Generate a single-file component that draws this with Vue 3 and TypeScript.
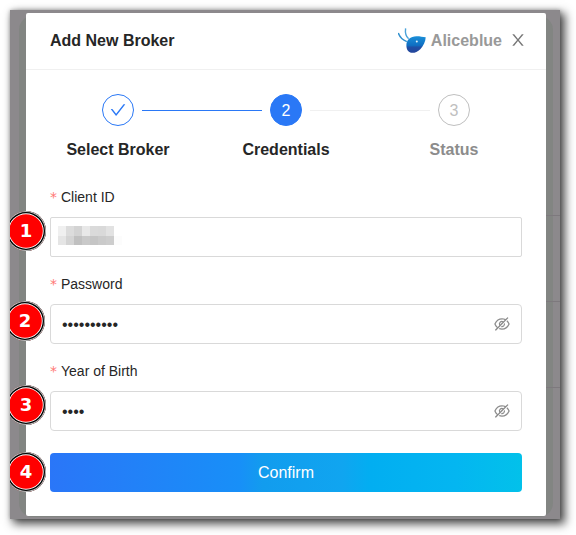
<script setup lang="ts">
interface Step {
  label: string
  state: 'done' | 'active' | 'wait'
}

const steps: Step[] = [
  { label: 'Select Broker', state: 'done' },
  { label: 'Credentials', state: 'active' },
  { label: 'Status', state: 'wait' },
]

const secrets = [
  { label: 'Password', value: '••••••••••' },
  { label: 'Year of Birth', value: '••••' },
]

const mosaic: string[] = [
  '#f0f0f0', '#dcdcdc', '#d3d3d3', '#e8e8e8', '#dadada', '#d9d9d9', '#e2e2e2', '#ffffff',
  '#e5e5e5', '#d4d4d4', '#c0c0c0', '#c9c9c9', '#c5c5c5', '#cacaca', '#cdcdcd', '#fcfcfc',
]
</script>

<template>
  <div class="page">
    <div class="backdrop">
      <div class="panel"></div>
      <i class="rule r1"></i>
      <i class="rule r2"></i>
      <i class="rule r3"></i>
      <section class="modal">
        <header class="head">
          <h1>Add New Broker</h1>
          <div class="brand">
            <svg class="logo" viewBox="0 0 28 26">
              <defs>
                <linearGradient id="body" x1="0" y1="0" x2="0" y2="1">
                  <stop offset="0" stop-color="#1a8fd8" />
                  <stop offset=".55" stop-color="#0f6ec2" />
                  <stop offset=".66" stop-color="#1f4fa6" />
                  <stop offset="1" stop-color="#24459a" />
                </linearGradient>
              </defs>
              <path d="M.3 5C1.600 9 4.500 12 8.800 13.600" fill="none" stroke="#2f8fcd" stroke-width="1.500" />
              <path d="M7.600.3C7 4.500 7.600 8 10.600 10.800" fill="none" stroke="#4ba3da" stroke-width="1.400" />
              <path d="M8.400 17.500C8.300 12 12.500 8.300 18.500 8.300C22 8.300 25 9 27.700 9.200C27.500 13.500 25.500 17.500 22.300 21.200C19.500 24 16 25.200 13 24.700C10 24.100 8.400 21 8.400 17.500Z" fill="url(#body)" />
              <circle cx="18.800" cy="13.500" r="1" fill="#e4f3fb" />
            </svg>
            <span>Aliceblue</span>
            <svg class="close" viewBox="0 0 1024 1024"><path d="M563.8 512l262.5-312.9c4.4-5.2.7-13.1-6.1-13.1h-79.8c-4.7 0-9.2 2.1-12.3 5.7L511.6 449.8 295.1 191.7c-3-3.6-7.5-5.7-12.3-5.7H203c-6.8 0-10.5 7.9-6.1 13.1L459.4 512 196.9 824.9A7.95 7.95 0 00203 838h79.8c4.7 0 9.2-2.1 12.3-5.7l216.5-258.1 216.5 258.1c3 3.6 7.5 5.700 12.300 5.700h79.800c6.800 0 10.500-7.900 6.100-13.100L563.800 512z" /></svg>
          </div>
        </header>

        <ol class="steps">
          <li v-for="(step, i) in steps" :key="step.label" :class="step.state">
            <div class="track">
              <i class="line before"></i>
              <span class="dot">
                <svg v-if="step.state === 'done'" viewBox="0 0 1024 1024"><path d="M912 190h-69.9c-9.8 0-19.1 4.5-25.1 12.2L404.7 724.5 207 474a32 32 0 00-25.1-12.2H112c-6.7 0-10.4 7.7-6.3 12.9l273.9 347c12.8 16.2 37.4 16.2 50.3 0l488.4-618.9c4.1-5.1.4-12.8-6.3-12.8z" /></svg>
                <span v-else class="num">{{ i + 1 }}</span>
              </span>
              <i class="line after"></i>
            </div>
            <b>{{ step.label }}</b>
          </li>
        </ol>

        <div class="form">
          <div class="field">
            <label><em>*</em>Client ID</label>
            <div class="input square">
              <div class="mosaic">
                <i v-for="(c, i) in mosaic" :key="i" :style="{ background: c }"></i>
              </div>
            </div>
          </div>
          <div v-for="s in secrets" :key="s.label" class="field">
            <label><em>*</em>{{ s.label }}</label>
            <div class="input">
              <span class="value">{{ s.value }}</span>
              <svg class="eye" viewBox="0 0 1024 1024">
                <path d="M942.2 486.2Q889.47 375.11 816.7 305l-50.88 50.88C807.31 395.53 843.45 447.4 874.7 512 791.5 684.2 673.4 766 512 766q-72.67 0-133.87-22.38L323 798.75Q408 838 512 838q288.3 0 430.2-300.3a60.29 60.29 0 000-51.5zm-63.57-320.64L836 122.88a8 8 0 00-11.32 0L715.31 232.2Q624.86 186 512 186q-288.3 0-430.2 300.3a60.3 60.3 0 000 51.5q56.69 119.4 136.5 191.41L112.48 835a8 8 0 000 11.31L155.17 889a8 8 0 0011.31 0l712.15-712.12a8 8 0 000-11.32zM149.3 512C232.6 339.8 350.7 258 512 258c54.54 0 104.13 9.36 149.12 28.39l-70.3 70.3a176 176 0 00-238.13 238.13l-83.42 83.42C223.1 637.49 183.3 582.28 149.3 512zm246.7 0a112.11 112.11 0 01146.2-106.69L401.31 546.2A112 112 0 01396 512z" />
                <path d="M508 624c-3.46 0-6.87-.16-10.25-.47l-52.82 52.82a176.09 176.09 0 00227.42-227.42l-52.82 52.82c.31 3.38.47 6.79.47 10.25a111.94 111.94 0 01-112 112z" />
              </svg>
            </div>
          </div>
          <button type="button">Confirm</button>
        </div>
      </section>
      <div class="markers">
        <span v-for="n in 4" :key="n" class="marker" :class="'m' + n">{{ n }}</span>
      </div>
    </div>
  </div>
</template>

<style>
body {
  margin: 0;
  background: #fff;
}
</style>

<style scoped>
* {
  box-sizing: border-box;
}
.page {
  width: 576px;
  height: 535px;
  padding: 10px;
  overflow: hidden;
  background: #fff;
  font-family: 'Liberation Sans', Arial, sans-serif;
  color: #262626;
}
.backdrop {
  position: relative;
  width: 550px;
  height: 509px;
  padding: 3px 14px 3px 16px;
  background: #8c898c;
  box-shadow: 4px 4px 9px 1px rgba(0, 0, 0, 0.7), 0 0 4px rgba(0, 0, 0, 0.25);
}
.panel {
  position: absolute;
  left: 9px;
  top: 6px;
  width: 534px;
  height: 501px;
  border-radius: 14px;
  background: #828582;
}
.rule {
  position: absolute;
  right: 0;
  width: 14px;
  height: 1px;
  background: #7d797d;
}
.r1 { top: 205px; }
.r2 { top: 291px; }
.r3 { top: 377px; }
.modal {
  position: relative;
  width: 520px;
  height: 503px;
  border-radius: 2px;
  background: #fff;
}
.head {
  height: 57px;
  padding: 0 19px 0 24px;
  display: flex;
  justify-content: space-between;
  align-items: center;
  border-bottom: 1px solid #f0f0f0;
}
h1 {
  margin: 0;
  font-size: 16px;
  line-height: 22px;
}
.brand {
  display: flex;
  align-items: center;
  color: #999;
  font-size: 16px;
  font-weight: bold;
  line-height: 22px;
}
.logo {
  width: 28px;
  height: 26px;
  margin-right: 5px;
}
.close {
  width: 18px;
  height: 18px;
  margin: -2px 0 0 7px;
  fill: #777;
}
.steps {
  display: grid;
  grid-template-columns: repeat(3, 168px);
  margin: 0 8px;
  padding: 24px 0 0;
  list-style: none;
}
.steps li {
  display: flex;
  flex-direction: column;
  align-items: center;
}
.track {
  display: flex;
  align-items: center;
  gap: 8px;
  width: 100%;
}
.line {
  flex: 1;
  height: 1px;
  background: #f0f0f0;
}
.done .after,
.active .before {
  background: #2a78f6;
}
.done .before,
.wait .after {
  background: transparent;
}
.dot {
  display: flex;
  align-items: center;
  justify-content: center;
  width: 32px;
  height: 32px;
  border: 1px solid #bfbfbf;
  border-radius: 50%;
  color: #bfbfbf;
  font-size: 16px;
}
.num {
  padding-top: 2px;
}
.dot svg {
  width: 18px;
  height: 18px;
  fill: #2a78f6;
}
.done .dot {
  border-color: #2a78f6;
}
.active .dot {
  border-color: #2a78f6;
  background: #2a78f6;
  color: #fff;
}
.steps b {
  margin-top: 13px;
  font-size: 16px;
  line-height: 22px;
}
.wait b {
  color: #8c8c8c;
}
.form {
  padding: 25px 24px 0;
}
.field {
  margin-bottom: 16px;
}
label {
  display: flex;
  height: 31px;
  font-size: 14px;
  line-height: 22px;
}
em {
  margin-right: 4px;
  color: #ff7875;
  font-family: 'DejaVu Sans', sans-serif;
  font-style: normal;
}
.input {
  display: flex;
  align-items: center;
  justify-content: space-between;
  height: 40px;
  padding: 0 10px 0 11px;
  border: 1px solid #d9d9d9;
  border-radius: 4px;
}
.square {
  align-items: flex-start;
  padding: 8px 7px;
  border-radius: 2px;
}
.mosaic {
  display: grid;
  grid-template-columns: repeat(8, 8px);
  grid-template-rows: 10px 9px;
}
.value {
  padding-top: 2px;
  font-size: 16px;
  line-height: 22px;
}
.eye {
  width: 18px;
  height: 18px;
  fill: #8c8c8c;
}
button {
  display: block;
  width: 472px;
  height: 39px;
  margin-top: 22px;
  padding: 0;
  border: 0;
  border-radius: 4px;
  background: linear-gradient(90deg, #2a76f8, #188ff8 40%, #129cee 45%, #10a5f0 62%, #02aef1 68%, #04b6f1 86%, #02c1ea);
  color: #fff;
  font: 16px/39px 'Liberation Sans', Arial, sans-serif;
}
.markers {
  position: absolute;
  inset: 0 auto 0 0;
  width: 60px;
  overflow: hidden;
}
.marker {
  position: absolute;
  left: -4px;
  width: 40px;
  height: 40px;
  border-radius: 50%;
  background: #f00;
  box-shadow: inset 0 0 0 1px #bbb, inset 0 0 0 2.300px #000, inset 0 0 0 3.200px #fff;
  color: #fff;
  font: bold 18px/40px 'DejaVu Sans', sans-serif;
  text-align: center;
}
.m1 { top: 201px; }
.m2 { top: 291px; left: -5px; }
.m3 { top: 375px; }
.m4 { top: 442px; }
</style>
